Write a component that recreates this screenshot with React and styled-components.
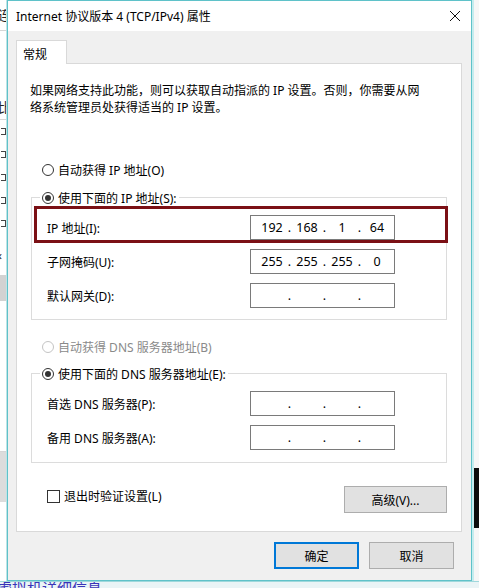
import React from 'react';
import styled, { createGlobalStyle } from 'styled-components';

const GlobalStyle = createGlobalStyle`
  html, body {
    margin: 0;
    padding: 0;
    background: #f3f3f3;
  }
  body {
    font-family: "Noto Sans", "Noto Sans CJK SC", sans-serif;
    font-size: 12px;
    color: #000;
  }
`;

const Desktop = styled.div`
  width: 479px;
  height: 588px;
  overflow: hidden;
  display: grid;
  grid-template-columns: 7px 465px 7px;
  grid-template-rows: 581px 1fr;
  background: #f7f7f7;
`;

const LeftStrip = styled.div`
  grid-column: 1;
  grid-row: 1;
  display: flex;
  flex-direction: column;
  overflow: hidden;
  background: #fff;
  border-right: 1px solid #bfe3e6;
  box-sizing: border-box;
`;

const StripGlyph = styled.div`
  height: ${(p) => p.h}px;
  margin-left: -2px;
  font-size: 13px;
  line-height: ${(p) => p.h}px;
  white-space: nowrap;
  color: #222;
  border-bottom: ${(p) => (p.line ? '1px solid #d6d6d6' : 'none')};
  background: ${(p) => p.bg || 'transparent'};
`;

const StripIcon = styled.div`
  width: 5px;
  height: 7px;
  margin: 8px 0 8px 1px;
  border: 1px solid #444;
  border-left: none;
  box-sizing: border-box;
`;

const RightStrip = styled.div`
  grid-column: 3;
  grid-row: 1;
  display: flex;
  flex-direction: column;
  background: #f6f6f6;
  border-left: 2px solid #c6ecee;
  box-sizing: border-box;
`;

const DarkBlock = styled.div`
  margin-top: 468px;
  height: 60px;
  background: #0b0b0b;
`;

const BottomRow = styled.div`
  grid-column: 1 / 4;
  grid-row: 2;
  background: #eaf4f6;
  border-top: 1px solid #9fd8dc;
  overflow: hidden;
`;

const BottomText = styled.div`
  margin: -3px 0 0 -3px;
  font-size: 15px;
  line-height: 18px;
  color: #3a34b8;
  white-space: nowrap;
`;

const Dialog = styled.div`
  grid-column: 2;
  grid-row: 1;
  display: flex;
  flex-direction: column;
  border: 1px solid #5fc2c9;
  background: #f0f0f0;
`;

const TitleBar = styled.div`
  height: 30px;
  display: flex;
  align-items: center;
  justify-content: space-between;
  padding: 0 10px 0 8px;
  background: #fff;
`;

const Title = styled.div`
  font-size: 12px;
`;

const Body = styled.div`
  padding: 9px 9px 0 8px;
  display: flex;
  flex-direction: column;
`;

const Tab = styled.div`
  width: 51px;
  height: 24px;
  box-sizing: border-box;
  padding: 4px 0 0 6px;
  background: #fff;
  border: 1px solid #d9d9d9;
  border-bottom: none;
  position: relative;
  z-index: 1;
  margin-bottom: -1px;
`;

const Panel = styled.div`
  background: #fff;
  border: 1px solid #d9d9d9;
  display: flex;
  flex-direction: column;
  padding: 18px 14px 18px 13px;
`;

const Description = styled.p`
  margin: 0;
  line-height: 17px;
`;

const RadioRow = styled.label`
  display: flex;
  align-items: center;
  height: 17px;
  margin: ${(p) => p.mt || 0}px 0 0 12px;
  gap: 4px;
  color: ${(p) => (p.disabled ? '#8a8a8a' : '#000')};
  white-space: nowrap;
`;

const RadioDot = styled.span`
  width: 12px;
  height: 12px;
  box-sizing: border-box;
  border-radius: 50%;
  border: 1px solid ${(p) => (p.disabled ? '#c4c4c4' : '#333')};
  display: flex;
  align-items: center;
  justify-content: center;
  background: #fff;

  &::after {
    content: '';
    width: 6px;
    height: 6px;
    border-radius: 50%;
    background: ${(p) => (p.checked ? '#333' : 'transparent')};
  }
`;

const Group = styled.fieldset`
  margin: ${(p) => p.mt}px 0 0 1px;
  padding: ${(p) => p.pt}px 0 ${(p) => p.pb}px 0;
  border: 1px solid #dcdcdc;
  min-width: 0;
  display: flex;
  flex-direction: column;
`;

const Legend = styled.legend`
  padding: 0 2px;
  margin-left: 8px;
  background: #fff;
`;

const LegendRadio = styled(RadioRow)`
  margin: 0;
`;

const Highlight = styled.div`
  margin: 0 -2px 0 2px;
  border: 3px solid #7b1015;
  padding: 6px 0 0 10px;
  display: flex;
  align-items: center;
`;

const FieldRow = styled.div`
  display: flex;
  align-items: center;
  padding-left: 15px;
  margin-top: ${(p) => p.mt}px;
`;

const FieldLabel = styled.div`
  width: 203px;
  flex: none;
  white-space: nowrap;
`;

const IpBox = styled.div`
  width: 145px;
  height: 25px;
  box-sizing: border-box;
  border: 1px solid #7a7a7a;
  background: #fff;
  display: flex;
  align-items: center;
  padding-left: 6px;
  font-size: 12.5px;
`;

const Octet = styled.span`
  width: 30px;
  text-align: center;
`;

const Dot = styled.span`
  width: 5px;
  text-align: center;
`;

const ActionRow = styled.div`
  display: flex;
  justify-content: space-between;
  align-items: flex-start;
  margin-top: 23px;
  padding-left: 17px;
`;

const CheckRow = styled.label`
  display: flex;
  align-items: center;
  gap: 4px;
  margin-top: 1px;
`;

const CheckBox = styled.span`
  width: 13px;
  height: 13px;
  box-sizing: border-box;
  border: 1px solid #333;
  background: #fff;
`;

const Button = styled.button`
  width: ${(p) => p.w}px;
  height: 27px;
  box-sizing: border-box;
  font: inherit;
  color: #000;
  background: #e1e1e1;
  border: ${(p) => (p.primary ? '2px solid #0078d7' : '1px solid #adadad')};
  padding: 0;
  cursor: default;
`;

const Footer = styled.div`
  display: flex;
  justify-content: flex-end;
  gap: 10px;
  padding: 10px 8px 11px 0;
`;

const Radio = ({ checked, disabled, children, mt }) => (
  <RadioRow mt={mt} disabled={disabled}>
    <RadioDot checked={checked} disabled={disabled} />
    {children}
  </RadioRow>
);

const IpField = ({ value }) => {
  const parts = value ? value.split('.') : ['', '', '', ''];
  return (
    <IpBox>
      {parts.map((p, i) => (
        <React.Fragment key={i}>
          {i > 0 && <Dot>.</Dot>}
          <Octet>{p}</Octet>
        </React.Fragment>
      ))}
    </IpBox>
  );
};

const CloseIcon = () => (
  <svg width="12" height="12" viewBox="0 0 12 12">
    <path d="M1 1 L11 11 M11 1 L1 11" stroke="#111" strokeWidth="1" fill="none" />
  </svg>
);

const leftItems = [
  { t: '连', h: 30, line: true },
  { t: '', h: 64 },
  { t: '比', h: 24, line: true },
];

const App = () => (
  <>
    <GlobalStyle />
    <Desktop>
      <LeftStrip>
        {leftItems.map((it, i) => (
          <StripGlyph key={i} h={it.h} line={it.line}>
            {it.t}
          </StripGlyph>
        ))}
        {[0, 1, 2, 3, 4].map((i) => (
          <StripIcon key={i} />
        ))}
        <StripGlyph h={40}>‹</StripGlyph>
        <StripGlyph h={26} bg="#d2d2d2" />
        <StripGlyph h={150} line />
        <StripGlyph h={50} bg="#dcdcdc" />
      </LeftStrip>

      <Dialog>
        <TitleBar>
          <Title>Internet 协议版本 4 (TCP/IPv4) 属性</Title>
          <CloseIcon />
        </TitleBar>
        <Body>
          <Tab>常规</Tab>
          <Panel>
            <Description>
              如果网络支持此功能，则可以获取自动指派的 IP 设置。否则，你需要从网
              <br />
              络系统管理员处获得适当的 IP 设置。
            </Description>

            <Radio mt={45}>自动获得 IP 地址(O)</Radio>

            <Group mt={11} pt={0} pb={11}>
              <Legend>
                <LegendRadio as="span">
                  <RadioDot checked />
                  使用下面的 IP 地址(S):
                </LegendRadio>
              </Legend>
              <Highlight>
                <FieldLabel>IP 地址(I):</FieldLabel>
                <IpField value="192.168.1.64" />
              </Highlight>
              <FieldRow mt={6}>
                <FieldLabel>子网掩码(U):</FieldLabel>
                <IpField value="255.255.255.0" />
              </FieldRow>
              <FieldRow mt={9}>
                <FieldLabel>默认网关(D):</FieldLabel>
                <IpField />
              </FieldRow>
            </Group>

            <Radio mt={18} disabled>
              自动获得 DNS 服务器地址(B)
            </Radio>

            <Group mt={10} pt={9} pb={12}>
              <Legend>
                <LegendRadio as="span">
                  <RadioDot checked />
                  使用下面的 DNS 服务器地址(E):
                </LegendRadio>
              </Legend>
              <FieldRow mt={0}>
                <FieldLabel>首选 DNS 服务器(P):</FieldLabel>
                <IpField />
              </FieldRow>
              <FieldRow mt={9}>
                <FieldLabel>备用 DNS 服务器(A):</FieldLabel>
                <IpField />
              </FieldRow>
            </Group>

            <ActionRow>
              <CheckRow>
                <CheckBox />
                退出时验证设置(L)
              </CheckRow>
              <Button w={103}>高级(V)...</Button>
            </ActionRow>
          </Panel>
          <Footer>
            <Button w={85} primary>
              确定
            </Button>
            <Button w={85}>取消</Button>
          </Footer>
        </Body>
      </Dialog>

      <RightStrip>
        <DarkBlock />
      </RightStrip>

      <BottomRow>
        <BottomText>虚拟机详细信息</BottomText>
      </BottomRow>
    </Desktop>
  </>
);

export default App;
